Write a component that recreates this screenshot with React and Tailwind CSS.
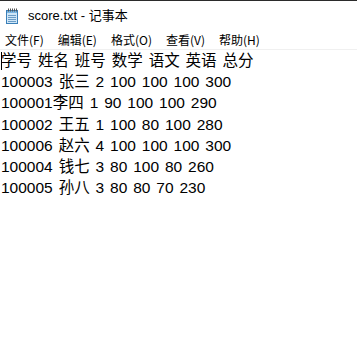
import React from 'react';

const rows = [
  '学号 姓名 班号 数学 语文 英语 总分',
  '100003 张三 2 100 100 100 300',
  '100001李四 1 90 100 100 290',
  '100002 王五 1 100 80 100 280',
  '100006 赵六 4 100 100 100 300',
  '100004 钱七 3 80 100 80 260',
  '100005 孙八 3 80 80 70 230',
];

const menus = ['文件(F)', '编辑(E)', '格式(O)', '查看(V)', '帮助(H)'];

function NotepadIcon() {
  return (
    <svg width="14" height="16" viewBox="0 0 14 16">
      <rect x="1.5" y="2.5" width="11" height="13" fill="#cfe6f7" stroke="#3a7fb8" />
      <rect x="2" y="3" width="10" height="2" fill="#7ab6e3" />
      {[7, 9, 11, 13].map((y) => (
        <line key={y} x1="3" y1={y + 0.5} x2="11" y2={y + 0.5} stroke="#6a9cc6" />
      ))}
      {[3, 5, 7, 9, 11].map((x) => (
        <rect key={x} x={x} y="0.5" width="1" height="3" fill="#555" />
      ))}
    </svg>
  );
}

export default function App() {
  return (
    <div
      className="w-[357px] h-[342px] bg-white flex flex-col overflow-hidden text-black"
      style={{ fontFamily: '"Noto Sans CJK SC", "Noto Sans", sans-serif' }}
    >
      <div className="h-[1px] bg-[#2b2b2b]" />
      <div className="h-[29px] flex items-center pl-[5px] gap-[9px] text-[12px]">
        <NotepadIcon />
        <span className="font-['Liberation_Sans','Noto_Sans_CJK_SC',sans-serif] text-[13px]">score.txt - 记事本</span>
      </div>
      <div className="h-[19px] flex items-center pl-[5px] gap-[14px] text-[12px]">
        {menus.map((m) => (
          <span key={m}>{m}</span>
        ))}
      </div>
      <div className="h-[1px] bg-[#f0f0f0]" />
      <div className="relative pl-[1px] text-[15.5px] leading-[21.2px] [word-spacing:1.6px] whitespace-pre font-['Liberation_Sans','Noto_Sans_CJK_SC',sans-serif]">
        <div className="absolute left-[1px] top-[2px] w-[1px] h-[18px] bg-black" />
        {rows.map((r) => (
          <div key={r} className="h-[21.2px]">{r}</div>
        ))}
      </div>
    </div>
  );
}
